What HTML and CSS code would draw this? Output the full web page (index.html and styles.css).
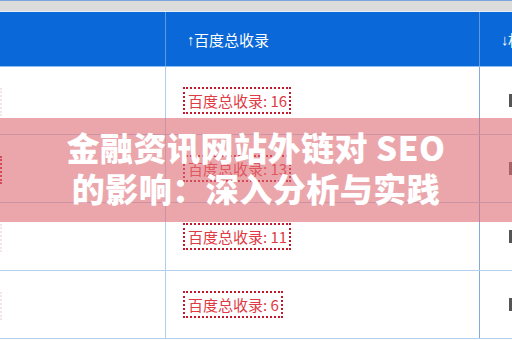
FILE: index.html
```html
<!DOCTYPE html>
<html lang="zh">
<head>
<meta charset="utf-8">
<link rel="stylesheet" href="styles.css">
</head>
<body>
<div class="page">
  <div class="topbar"></div>
  <div class="table">
    <div class="row head">
      <div class="cell c1"></div>
      <div class="cell c2"><span class="arrow">↑</span>百度总收录</div>
      <div class="cell c3"><span class="arrow">↓</span>相</div>
    </div>
    <div class="row">
      <div class="cell c1"><span class="edge faint"></span></div>
      <div class="cell c2"><span class="tag">百度总收录: 16</span></div>
      <div class="cell c3"><span class="mark"></span></div>
    </div>
    <div class="row">
      <div class="cell c1"><span class="edge"></span></div>
      <div class="cell c2"><span class="tag">百度总收录: 13</span></div>
      <div class="cell c3"><span class="mark"></span></div>
    </div>
    <div class="row">
      <div class="cell c1"><span class="edge faint"></span></div>
      <div class="cell c2"><span class="tag">百度总收录: 11</span></div>
      <div class="cell c3"><span class="mark"></span></div>
    </div>
    <div class="row">
      <div class="cell c1"><span class="edge faint"></span></div>
      <div class="cell c2"><span class="tag">百度总收录: 6</span></div>
      <div class="cell c3"><span class="mark"></span></div>
    </div>
  </div>
  <div class="banner">
    <h1>金融资讯网站外链对 SEO<br>的影响：深入分析与实践</h1>
  </div>
</div>
</body>
</html>
```

FILE: styles.css
```css
html, body {
  margin: 0;
  padding: 0;
  background: #ffffff;
}
.page {
  position: relative;
  width: 512px;
  height: 340px;
  overflow: hidden;
  font-family: "Noto Sans CJK SC", "Liberation Sans", sans-serif;
}
.topbar {
  height: 12px;
  background: #dcdcdc;
  border-top: 1px solid #7fa6dc;
  box-sizing: border-box;
  border-bottom: 1px solid #e8eef6;
}
.table {
  width: 720px;
}
.row {
  display: grid;
  grid-template-columns: 166px 314px 240px;
  height: 68px;
  border-bottom: 1px solid #b4d0ec;
  box-sizing: border-box;
}
.row.head {
  height: 55px;
  background: #0a68d8;
  border-bottom: 1px solid #8cc0f0;
  color: #ffffff;
  font-size: 15px;
}
.cell {
  display: flex;
  align-items: center;
  box-sizing: border-box;
}
.c1 {
  border-right: 1px solid #b0cfec;
}
.head .c1 {
  border-right: 1px solid #5c9ae6;
}
.c2 {
  padding-left: 17px;
  border-right: 1px solid #86a8e0;
}
.head .c2 {
  padding-left: 21px;
  padding-top: 1px;
  border-right: 1px solid #5c9ae6;
}
.c3 {
  padding-left: 29px;
}
.head .c3 {
  padding-left: 21px;
}
.arrow {
  font-family: "Liberation Sans", sans-serif;
  font-size: 15px;
  font-weight: 700;
  display: inline-block;
  width: 6px;
  overflow: hidden;
  margin-right: 1px;
}
.tag {
  display: inline-block;
  border: 2px dotted #c4182c;
  padding: 0 2px 0 3px;
  color: #e03a44;
  font-size: 15px;
  line-height: 23px;
}
.mark {
  display: block;
  width: 4px;
  height: 13px;
  background: #555555;
}
.edge {
  display: block;
  width: 2px;
  height: 28px;
  margin-top: 2px;
  border-right: 2px dotted #c4182c;
  margin-left: -2px;
}
.edge.faint {
  border-right-color: #f3e4e8;
}
.banner {
  position: absolute;
  left: 0;
  top: 118px;
  width: 512px;
  height: 104px;
  background: rgba(222, 107, 115, 0.6);
  display: flex;
  align-items: center;
  justify-content: center;
}
.banner h1 {
  margin: 0;
  color: #ffffff;
  font-size: 33px;
  font-weight: 900;
  line-height: 41px;
  text-align: center;
  letter-spacing: 0.5px;
  padding-bottom: 4px;
}
```
